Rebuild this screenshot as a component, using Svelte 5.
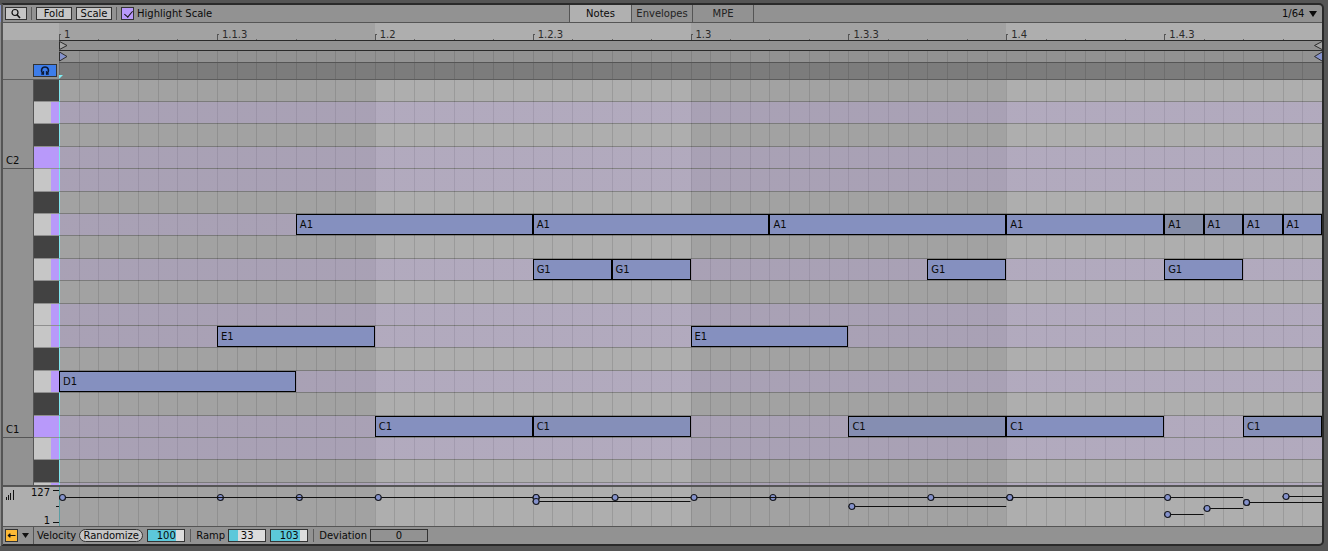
<script lang="ts">
    const COLUMNS = 64;
    const KEY_HEIGHT = 22.4; // average, rows are snapped to whole pixels
    const LAST_ROW = 2; // the lowest key is cut off

    const PITCHES = [
        'D#2', 'D2', 'C#2', 'C2', 'B1', 'A#1', 'A1', 'G#1', 'G1', 'F#1',
        'F1', 'E1', 'D#1', 'D1', 'C#1', 'C1', 'B0', 'A#0', 'A0'
    ];

    type Note = { pitch: string; start: number; end: number; vel: number };

    // start and end are in 1/64 of the bar
    const notes: Note[] = [
        { pitch: 'A1', start: 12, end: 24, vel: 100 },
        { pitch: 'A1', start: 24, end: 36, vel: 100 },
        { pitch: 'A1', start: 36, end: 48, vel: 100 },
        { pitch: 'A1', start: 48, end: 56, vel: 100 },
        { pitch: 'A1', start: 56, end: 58, vel: 33 },
        { pitch: 'A1', start: 58, end: 60, vel: 57 },
        { pitch: 'A1', start: 60, end: 62, vel: 80 },
        { pitch: 'A1', start: 62, end: 64, vel: 103 },
        { pitch: 'G1', start: 24, end: 28, vel: 100 },
        { pitch: 'G1', start: 28, end: 32, vel: 100 },
        { pitch: 'G1', start: 44, end: 48, vel: 100 },
        { pitch: 'G1', start: 56, end: 60, vel: 100 },
        { pitch: 'E1', start: 8, end: 16, vel: 100 },
        { pitch: 'E1', start: 32, end: 40, vel: 100 },
        { pitch: 'D1', start: 0, end: 12, vel: 100 },
        { pitch: 'C1', start: 16, end: 24, vel: 100 },
        { pitch: 'C1', start: 24, end: 32, vel: 84 },
        { pitch: 'C1', start: 40, end: 48, vel: 64 },
        { pitch: 'C1', start: 48, end: 56, vel: 100 },
        { pitch: 'C1', start: 60, end: 64, vel: 80 }
    ];

    const rows = PITCHES.map((pitch, i) => ({
        pitch,
        black: pitch.includes('#'),
        root: pitch.startsWith('C') && !pitch.includes('#'),
        height:
            i === PITCHES.length - 1
                ? LAST_ROW
                : Math.floor((i + 1) * KEY_HEIGHT) - Math.floor(i * KEY_HEIGHT),
        notes: notes.filter(n => n.pitch === pitch)
    }));

    const octaves = [
        { label: 'C2', height: sumHeights(0, 4) },
        { label: 'C1', height: sumHeights(4, 16) },
        { label: '', height: sumHeights(16, 19) }
    ];

    const rulerLabels = ['1', '1.1.3', '1.2', '1.2.3', '1.3', '1.3.3', '1.4', '1.4.3'];
    const tabs = ['Notes', 'Envelopes', 'MPE'];

    let activeTab = $state('Notes');
    let highlight = $state(true);
    let velocity = $state('100');
    let rampFrom = $state('33');
    let rampTo = $state('103');
    let deviation = $state('0');

    function sumHeights(from: number, to: number) {
        return rows.slice(from, to).reduce((sum, r) => sum + r.height, 0);
    }

    function percent(column: number) {
        return (column / COLUMNS) * 100 + '%';
    }

    function velY(vel: number) {
        return Math.round(3 + ((127 - vel) * 32) / 126) + 0.5;
    }

    // quiet notes turn grey
    function noteColor(vel: number) {
        const v = Math.min(vel, 100);
        return `rgb(133, ${Math.round(139 + v * 0.05)}, ${Math.round(155 + v * 0.36)})`;
    }

    function fill(value: string) {
        return (Number(value) / 127) * 100 + '%';
    }
</script>

{#snippet columns()}
    <div class="columns">
        {#each Array(COLUMNS) as _, i}
            <div class="column" class:light={Math.floor(i / 16) % 2 === 1}></div>
        {/each}
    </div>
{/snippet}

<div class="app">
    <div class="sliver"></div>
    <main class="panel">
        <header class="toolbar">
            <div class="tools">
                <button class="btn search" aria-label="Search">
                    <svg width="12" height="11" viewBox="0 0 12 11">
                        <circle cx="5" cy="4.5" r="3" fill="none" stroke="#111" stroke-width="1.2" />
                        <path d="M7 6.8L10 10" stroke="#111" stroke-width="1.6" />
                    </svg>
                </button>
                <span class="sep"></span>
                <button class="btn">Fold</button>
                <button class="btn">Scale</button>
                <span class="sep"></span>
                <label class="check">
                    <input type="checkbox" bind:checked={highlight} />
                    Highlight Scale
                </label>
            </div>
            <nav class="tabs">
                {#each tabs as tab}
                    <button class="tab" class:active={activeTab === tab} onclick={() => (activeTab = tab)}>{tab}</button>
                {/each}
            </nav>
            <div class="grid-size">
                <select aria-label="Grid size">
                    <option>1/64</option>
                    <option>1/32</option>
                    <option>1/16</option>
                </select>
                <svg width="8" height="6" viewBox="0 0 8 6"><path d="M0 0H8L4 6Z" fill="#0a0a0a" /></svg>
            </div>
        </header>

        <div class="editor">
            <div class="corner">
                <div class="corner-top"></div>
                <button class="preview" aria-label="Preview">
                    <svg width="10" height="9" viewBox="0 0 10 9" fill="none" stroke="#0c1a38">
                        <path d="M3.4 7.6C0.2 5.6 1.4 1 5 1S9.8 5.6 6.6 7.6" stroke-width="1.5" />
                        <path d="M1.2 8H4M6 8H8.8" stroke-width="1.4" />
                        <path d="M3.6 5V8.4M6.4 5V8.4" stroke-width="1" />
                    </svg>
                </button>
            </div>
            <div class="timeline">
                <div class="stack ruler">
                    {@render columns()}
                    <div class="ruler-labels">
                        {#each rulerLabels as label}
                            <div class="mark">
                                <span class="flag"></span>
                                <span>{label}</span>
                            </div>
                        {/each}
                    </div>
                </div>
                <div class="markers loop">
                    <svg width="9" height="9" viewBox="0 0 9 9"><path d="M0.5 0.5L8 4.5L0.5 8.5Z" fill="#a4a4a4" stroke="#2c2c2c" /></svg>
                    <svg width="9" height="9" viewBox="0 0 9 9"><path d="M9 0.5L1.5 4.5L9 8.5" fill="#a4a4a4" stroke="#2c2c2c" /></svg>
                </div>
                <div class="stack region">
                    {@render columns()}
                    <div class="markers">
                        <svg width="9" height="11" viewBox="0 0 9 11"><path d="M0.5 1L8 5.5L0.5 10Z" fill="#8592cc" stroke="#2c2c2c" /></svg>
                        <svg width="9" height="11" viewBox="0 0 9 11"><path d="M9 1L1.5 5.5L9 10" fill="#8592cc" stroke="#2c2c2c" /></svg>
                    </div>
                </div>
                <div class="stack scrub">
                    {@render columns()}
                    <svg class="playhead" width="4" height="4" viewBox="0 0 4 4"><path d="M0 0H4L0 4Z" fill="#7ff0f5" /></svg>
                </div>
            </div>

            <div class="keyboard">
                <div class="octaves">
                    {#each octaves as octave}
                        <div class="octave" style="height: {octave.height}px">{octave.label}</div>
                    {/each}
                </div>
                <div class="keys">
                    {#each rows as row}
                        <div class="key" class:black={row.black} class:root={row.root} style="height: {row.height}px"></div>
                    {/each}
                </div>
            </div>
            <div class="stack roll">
                {@render columns()}
                <div class="rows">
                    {#each rows as row}
                        <div class="row" class:in-scale={highlight && !row.black} style="height: {row.height}px">
                            {#each row.notes as note}
                                <div
                                    class="note"
                                    style="left: {percent(note.start)}; width: {percent(note.end - note.start)}; background: {noteColor(note.vel)}"
                                >{note.pitch}</div>
                            {/each}
                        </div>
                    {/each}
                </div>
            </div>

            <div class="vel-scale">
                <svg class="bars" width="8" height="10" viewBox="0 0 8 10" stroke="#111">
                    <path d="M0.5 7V10M2.5 5V10M4.5 3V10M7.5 0V10" />
                </svg>
                <div class="vel-range"><span>127</span><span>1</span></div>
                <svg class="ticks" width="6" height="39" viewBox="0 0 6 39" stroke="#111">
                    <path d="M0 3.5H6M3 19.5H6M0 35.5H6" />
                </svg>
            </div>
            <div class="stack vel-lane">
                {@render columns()}
                <svg class="vel-points" width="100%" height="39">
                    {#each notes as note}
                        <line x1={percent(note.start)} x2={percent(note.end)} y1={velY(note.vel)} y2={velY(note.vel)} stroke="#111" />
                        <svg x={percent(note.start)} overflow="visible">
                            <circle cx="3.5" cy={velY(note.vel)} r="3" fill="#8592cc" stroke="#16181f" stroke-width="1.2" />
                        </svg>
                    {/each}
                </svg>
            </div>
        </div>

        <footer class="footer">
            <div class="lane-toggle">
                <button class="btn orange" aria-label="Show velocity lane">
                    <svg width="9" height="5" viewBox="0 0 9 5"><path d="M0.5 2.5L2.5 0.5H3.5V2H8.5V3H3.5V4.5H2.5Z" fill="#111" /></svg>
                </button>
                <button class="menu" aria-label="Choose lane">
                    <svg width="7" height="5" viewBox="0 0 7 5"><path d="M0 0H7L3.5 5Z" fill="#111" /></svg>
                </button>
            </div>
            <label for="velocity">Velocity</label>
            <button class="pill">Randomize</button>
            <input id="velocity" class="value" bind:value={velocity} style="background-size: {fill(velocity)} 100%" />
            <span class="sep"></span>
            <label for="ramp">Ramp</label>
            <input id="ramp" class="value" bind:value={rampFrom} style="background-size: {fill(rampFrom)} 100%" />
            <input class="value" aria-label="Ramp end" bind:value={rampTo} style="background-size: {fill(rampTo)} 100%" />
            <span class="sep"></span>
            <label for="deviation">Deviation</label>
            <input id="deviation" class="value plain" bind:value={deviation} />
        </footer>
    </main>
</div>

<style>
    :global(body) {
        background: #555;
    }

    .app {
        display: flex;
        padding: 3px 4px 5px 0;
        font-family: "DejaVu Sans", Inter, sans-serif;
        font-size: 10px;
        line-height: 13px;
        color: #0a0a0a;
    }

    .app * {
        box-sizing: border-box;
    }

    button,
    input,
    select {
        margin: 0;
        padding: 0;
        font: inherit;
        color: inherit;
        border-radius: 0;
    }

    svg {
        display: block;
    }

    .sliver {
        width: 1px;
        margin-top: 2px;
        background: linear-gradient(#8790bf 17px, #8c8c8c 17px);
    }

    .panel {
        flex: 1;
        min-width: 0;
        border: 2px solid #2a2a2a;
        border-left-color: #555;
        border-radius: 0 5px 5px 0;
        background: #929292;
        overflow: hidden;
    }

    /* toolbar */
    .toolbar {
        display: grid;
        grid-template-columns: 1fr auto 1fr;
        height: 18px;
        padding-right: 2px;
        border-bottom: 1px solid #555;
    }

    .tools {
        display: flex;
        align-items: center;
        gap: 4px;
        padding-left: 2px;
    }

    .btn {
        display: flex;
        align-items: center;
        justify-content: center;
        width: 36px;
        height: 13px;
        border: 1px solid #333;
        background: #c6c6c6;
        line-height: 11px;
    }

    .search {
        width: 22px;
    }

    .sep {
        width: 1px;
        height: 13px;
        background: #5c5c5c;
    }

    .check {
        display: flex;
        align-items: center;
        gap: 3px;
    }

    .check input {
        appearance: none;
        width: 13px;
        height: 13px;
        border: 1px solid #333;
        background: #c6c6c6;
    }

    .check input:checked {
        background: #b899fa;
    }

    .check input:checked::before {
        content: "";
        display: block;
        width: 4px;
        height: 7px;
        margin: 1px 0 0 4px;
        border: solid #111;
        border-width: 0 1px 1px 0;
        transform: rotate(40deg);
    }

    .tabs {
        display: flex;
        border-left: 1px solid #555;
    }

    .tab {
        width: 61px;
        border: 0;
        border-right: 1px solid #555;
        background: none;
        color: #222;
    }

    .tab.active {
        width: 62px;
        background: #b0b0b0;
        color: #0a0a0a;
    }

    .grid-size {
        display: grid;
        justify-content: end;
        align-items: center;
        padding-right: 3px;
    }

    .grid-size > * {
        grid-area: 1 / 1;
    }

    .grid-size select {
        appearance: none;
        height: 15px;
        padding-right: 12px;
        border: 0;
        background: none;
    }

    .grid-size svg {
        justify-self: end;
        pointer-events: none;
    }

    /* editor: piano column on the left, time on the right */
    .editor {
        display: grid;
        grid-template-columns: 56px 1fr;
    }

    .stack {
        display: grid;
        min-width: 0;
    }

    .stack > * {
        grid-area: 1 / 1;
    }

    .columns {
        display: grid;
        grid-template-columns: repeat(64, minmax(0, 1fr));
    }

    .column {
        border-left: 1px solid rgba(0, 0, 0, 0.11);
    }

    .corner {
        display: flex;
        flex-direction: column;
        align-items: flex-end;
        border-bottom: 1px solid #5c5c5c;
    }

    .corner-top {
        width: 100%;
        height: 17px;
        margin-bottom: 24px;
        background: #aeaeae;
    }

    .preview {
        display: flex;
        align-items: center;
        justify-content: center;
        width: 24px;
        height: 13px;
        margin-right: 2px;
        border: 1px solid #333;
        background: #3d7dea;
    }

    .timeline {
        min-width: 0;
    }

    .ruler {
        height: 18px;
        border-bottom: 1px solid #2a2a2a;
        color: #2a2a2a;
    }

    .ruler .column,
    .roll .column,
    .vel-lane .column {
        background: #a2a2a2;
    }

    .ruler .column.light,
    .roll .column.light,
    .vel-lane .column.light {
        background: #aeaeae;
    }

    .ruler .column {
        border: 0;
    }

    .ruler .column:nth-child(odd) {
        background-image: linear-gradient(#666, #666);
        background-position: left bottom;
        background-size: 1px 1px;
        background-repeat: no-repeat;
    }

    .ruler-labels {
        display: grid;
        grid-template-columns: repeat(8, minmax(0, 1fr));
    }

    .mark {
        display: flex;
        align-items: flex-end;
        gap: 3px;
        line-height: 10px;
    }

    .flag {
        width: 2px;
        height: 6px;
        border-top: 1px solid #555;
        border-left: 1px solid #555;
    }

    .markers {
        display: flex;
        justify-content: space-between;
    }

    .loop {
        height: 10px;
        border-bottom: 1px solid #2a2a2a;
    }

    .region {
        height: 12px;
        border-bottom: 1px solid #555;
    }

    .scrub {
        height: 17px;
        border-bottom: 1px solid #5c5c5c;
        background: #7c7c7c;
    }

    .playhead {
        align-self: end;
    }

    /* keys */
    .keyboard {
        display: grid;
        grid-template-columns: 31px 25px;
        border-bottom: 2px solid #555;
    }

    .octaves {
        border-right: 1px solid #555;
    }

    .octave {
        display: flex;
        align-items: flex-end;
        padding: 0 3px 1px;
        border-bottom: 1px solid #555;
    }

    .octave:last-child {
        border-bottom: 0;
    }

    .key {
        border-bottom: 1px solid #8f8f8f;
        background: linear-gradient(to right, #c6c6c6 17px, #b899fa 17px);
    }

    .key.black {
        background: #424242;
    }

    .key.root {
        background: #b899fa;
    }

    .key:last-child,
    .row:last-child {
        border-bottom: 0;
    }

    /* note grid */
    .roll {
        border-bottom: 2px solid #555;
    }

    .roll .column:first-child {
        border-left-color: #7fe6ee;
    }

    .row {
        position: relative;
        border-bottom: 1px solid rgba(0, 0, 0, 0.24);
    }

    .row.in-scale {
        background: linear-gradient(rgba(188, 158, 235, 0.26), rgba(188, 158, 235, 0.26)) 1px 0 no-repeat;
    }

    .note {
        position: absolute;
        top: 0;
        bottom: 0;
        display: flex;
        align-items: center;
        padding-left: 3px;
        border: 1px solid #000;
    }

    /* velocity lane */
    .vel-scale {
        display: flex;
        background: #aeaeae;
        border-bottom: 1px solid #555;
    }

    .bars {
        margin: 3px 0 0 3px;
    }

    .vel-range {
        flex: 1;
        display: flex;
        flex-direction: column;
        justify-content: space-between;
        align-items: flex-end;
        padding-right: 3px;
        line-height: 11px;
    }

    .vel-lane {
        border-bottom: 1px solid #555;
    }

    .vel-lane .column:first-child {
        border-left-color: #5a9da3;
    }

    /* footer */
    .footer {
        display: flex;
        align-items: center;
        gap: 4px;
        height: 17px;
    }

    .footer .sep {
        margin: 0 1px;
    }

    .lane-toggle {
        display: flex;
        align-items: center;
        align-self: stretch;
        gap: 4px;
        width: 31px;
        margin-right: -1px;
        padding-left: 2px;
        border-right: 1px solid #555;
    }

    .orange {
        width: 13px;
        background: #fdb936;
    }

    .menu {
        border: 0;
        background: none;
    }

    .footer label {
        margin-right: -1px;
    }

    .pill {
        width: 64px;
        height: 13px;
        border: 1px solid #333;
        border-radius: 7px;
        background: #c6c6c6;
        line-height: 11px;
    }

    .value {
        width: 38px;
        height: 13px;
        border: 1px solid #333;
        background: #dcdcdc linear-gradient(#5cc8da, #5cc8da) no-repeat;
        text-align: center;
        line-height: 11px;
    }

    .value.plain {
        width: 58px;
        background: none;
    }
</style>
